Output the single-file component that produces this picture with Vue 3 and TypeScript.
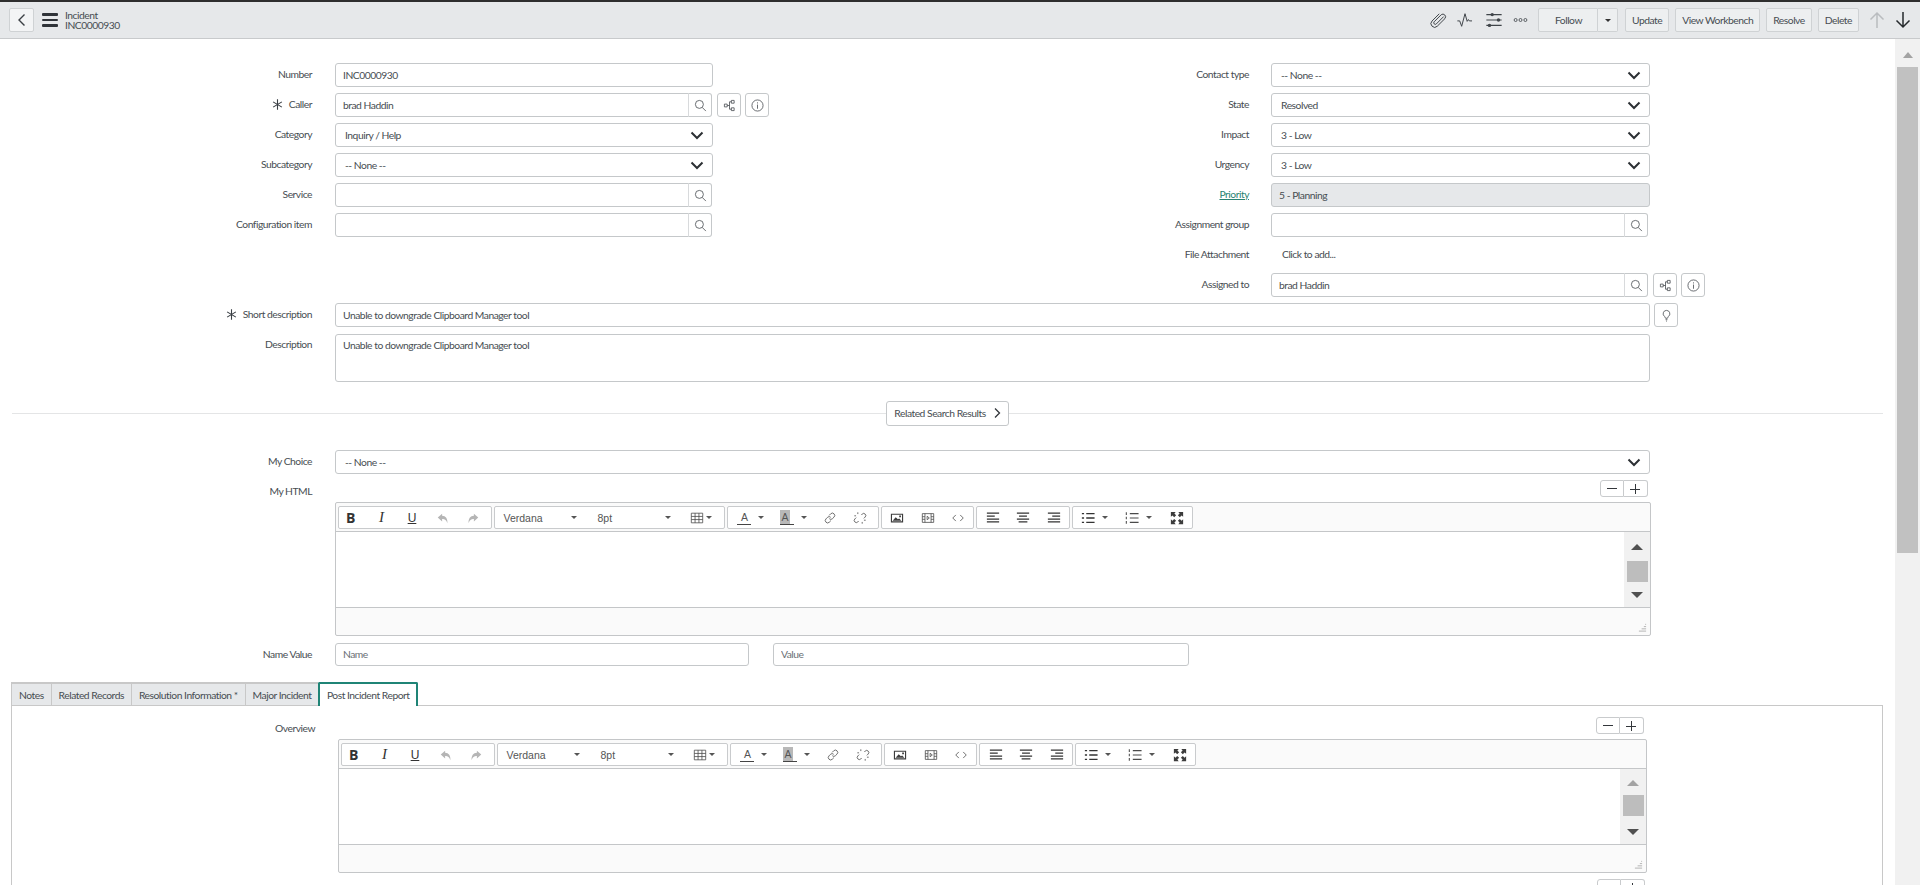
<template>
  <div class="app">
    <!-- 顶部表单头 -->
    <header class="form-header">
      <button class="back-btn" aria-label="Back">
        <svg viewBox="0 0 12 16" class="back-icon"><path d="M8.5 2.5 3 8l5.5 5.5" /></svg>
      </button>
      <div class="menu-icon"><span></span><span></span><span></span></div>
      <div class="record-title">
        <div>Incident</div>
        <div>INC0000930</div>
      </div>

      <div class="header-actions">
        <svg class="hd-icon clip" viewBox="0 0 20 20"><path d="M16.3 6.2 8.1 14.4a1.7 1.7 0 0 1-2.4-2.4l7.9-7.9a3 3 0 0 1 4.2 4.2l-8.6 8.6a4.1 4.1 0 0 1-5.8-5.8l8-8" /></svg>
        <svg class="hd-icon pulse" viewBox="0 0 20 20"><path d="M1.5 11h2.6l2.2 6L10 3l2.4 8.5 1.4-2 1 1.5h3" /></svg>
        <svg class="hd-icon sliders" viewBox="0 0 20 20">
          <path d="M1.5 4h17M1.5 10h17M1.5 16h17" />
          <circle cx="8" cy="4" r="1.9" /><circle cx="15" cy="10" r="1.9" /><circle cx="5" cy="16" r="1.9" />
        </svg>
        <svg class="hd-icon dots" viewBox="0 0 20 8"><circle cx="3.5" cy="4" r="2" /><circle cx="10" cy="4" r="2" /><circle cx="16.5" cy="4" r="2" /></svg>

        <div class="follow-group">
          <button class="hd-btn follow">Follow</button>
          <button class="hd-btn follow-caret"><i class="caret dark"></i></button>
        </div>
        <button v-for="b in headerButtons" :key="b" class="hd-btn">{{ b }}</button>
        <svg class="nav-arrow up" viewBox="0 0 18 20"><path d="M9 18V3M2.5 9.5 9 3l6.5 6.5" /></svg>
        <svg class="nav-arrow" viewBox="0 0 18 20"><path d="M9 2v15M2.5 10.5 9 17l6.5-6.5" /></svg>
      </div>
    </header>

    <div class="page">
      <main class="content">
        <div class="two-cols">
          <div class="col left-col">
            <div v-for="f in leftFields" :key="f.label" class="field">
              <label class="label">
                <svg v-if="f.required" class="req" viewBox="0 0 10 10"><path :d="starPath" /></svg>{{ f.label }}
              </label>
              <select v-if="f.kind === 'select'" class="select-box ctl-left"><option>{{ f.value }}</option></select>
              <div v-else-if="f.kind === 'lookup'" class="lookup ctl-left-lookup">
                <input class="input-box" type="text" :value="f.value" />
                <button class="search-btn"><svg class="ic" viewBox="0 0 14 14"><path :d="searchPath" /></svg></button>
              </div>
              <input v-else class="input-box ctl-left" type="text" :value="f.value" />
              <template v-if="f.refs">
                <button class="side-btn first"><svg class="ic" viewBox="0 0 14 14"><path :d="treePath" /></svg></button>
                <button class="side-btn"><svg class="ic" viewBox="0 0 14 14"><path :d="infoPath" /></svg></button>
              </template>
            </div>
          </div>

          <div class="col right-col">
            <div v-for="f in rightFields" :key="f.label" class="field">
              <label class="label r-label" :class="{ link: f.link }">{{ f.label }}</label>
              <select v-if="f.kind === 'select'" class="select-box ctl-right"><option>{{ f.value }}</option></select>
              <div v-else-if="f.kind === 'lookup'" class="lookup ctl-right-lookup">
                <input class="input-box" type="text" :value="f.value" />
                <button class="search-btn"><svg class="ic" viewBox="0 0 14 14"><path :d="searchPath" /></svg></button>
              </div>
              <div v-else-if="f.kind === 'attach'" class="attach">{{ f.value }}</div>
              <input v-else class="input-box ctl-right" :class="{ readonly: f.kind === 'readonly' }" type="text" :value="f.value" readonly />
              <template v-if="f.refs">
                <button class="side-btn first"><svg class="ic" viewBox="0 0 14 14"><path :d="treePath" /></svg></button>
                <button class="side-btn"><svg class="ic" viewBox="0 0 14 14"><path :d="infoPath" /></svg></button>
              </template>
            </div>
          </div>
        </div>

        <div class="field">
          <label class="label">
            <svg class="req" viewBox="0 0 10 10"><path :d="starPath" /></svg>Short description
          </label>
          <input class="input-box ctl-full" type="text" value="Unable to downgrade Clipboard Manager tool" />
          <button class="side-btn bulb"><svg class="ic" viewBox="0 0 14 14"><path d="M7 1.5a3.6 3.6 0 0 0-2 6.6L6 10h2l1-1.9a3.6 3.6 0 0 0-2-6.6ZM6 11.5h2M6.5 13h1" /></svg></button>
        </div>
        <div class="field desc-row">
          <label class="label">Description</label>
          <textarea class="text-box ctl-full">Unable to downgrade Clipboard Manager tool</textarea>
        </div>

        <div class="related-row">
          <span class="rule"></span>
          <button class="related-btn">
            Related Search Results
            <svg viewBox="0 0 8 12" class="related-chev"><path d="M2 1.5 6.5 6 2 10.5" /></svg>
          </button>
          <span class="rule"></span>
        </div>

        <div class="field choice-row">
          <label class="label">My Choice</label>
          <select class="select-box ctl-full"><option>-- None --</option></select>
        </div>

        <!-- 第一个富文本编辑器 -->
        <div class="field html-row">
          <label class="label">My HTML</label>
          <div class="html-ctl">
            <div class="zoom-btns"><button class="zb minus"><i></i></button><button class="zb plus"><i></i><i></i></button></div>
            <div class="editor">
              <div class="toolbar">
                <div v-for="(group, gi) in toolbar" :key="gi" class="tb-group">
                  <div v-for="(item, ii) in group" :key="ii" class="tb-cell" :class="item.cls">
                    <span v-if="item.text" class="tb-text">{{ item.text }}</span>
                    <svg v-if="item.d" class="tb-svg" :class="{ solid: item.solid, muted: item.muted }" viewBox="0 0 16 16"><path :d="item.d" /></svg>
                    <i v-if="item.caret" class="caret"></i>
                  </div>
                </div>
              </div>
              <div class="editor-body">
                <div class="editor-text"></div>
                <div class="editor-scroll">
                  <i class="tri up-tri"></i><span class="thumb"></span><i class="tri down-tri"></i>
                </div>
              </div>
              <div class="editor-status"><svg class="resize" viewBox="0 0 10 10"><path d="M1 9h8M4 6.5h5M6.5 4H9M8 1.5h1" /></svg></div>
            </div>
          </div>
        </div>

        <div class="field name-row">
          <label class="label">Name Value</label>
          <input class="input-box name-input" type="text" placeholder="Name" />
          <input class="input-box value-input" type="text" placeholder="Value" />
        </div>

        <!-- 标签页 -->
        <div class="tabs">
          <div v-for="t in tabs" :key="t" class="tab" :class="{ active: t === activeTab }">{{ t }}</div>
        </div>
        <div class="tab-body">
          <div class="field overview-row">
            <label class="label ov-label">Overview</label>
            <div class="ov-ctl">
              <div class="zoom-btns"><button class="zb minus"><i></i></button><button class="zb plus"><i></i><i></i></button></div>
              <div class="editor">
                <div class="toolbar">
                  <div v-for="(group, gi) in toolbar" :key="gi" class="tb-group">
                    <div v-for="(item, ii) in group" :key="ii" class="tb-cell" :class="item.cls">
                      <span v-if="item.text" class="tb-text">{{ item.text }}</span>
                      <svg v-if="item.d" class="tb-svg" :class="{ solid: item.solid, muted: item.muted }" viewBox="0 0 16 16"><path :d="item.d" /></svg>
                      <i v-if="item.caret" class="caret"></i>
                    </div>
                  </div>
                </div>
                <div class="editor-body">
                  <div class="editor-text"></div>
                  <div class="editor-scroll">
                    <i class="tri up-tri off"></i><span class="thumb"></span><i class="tri down-tri"></i>
                  </div>
                </div>
                <div class="editor-status"><svg class="resize" viewBox="0 0 10 10"><path d="M1 9h8M4 6.5h5M6.5 4H9M8 1.5h1" /></svg></div>
              </div>
              <div class="zoom-btns next"><button class="zb minus"><i></i></button><button class="zb plus"><i></i><i></i></button></div>
            </div>
          </div>
        </div>
      </main>

      <div class="page-scroll">
        <i class="page-tri"></i>
        <span class="page-thumb"></span>
      </div>
    </div>
  </div>
</template>

<script setup lang="ts">
interface Field {
  label: string
  value: string
  kind: 'input' | 'select' | 'lookup' | 'readonly' | 'attach'
  required?: boolean
  refs?: boolean
  link?: boolean
}

interface ToolItem {
  text?: string
  d?: string
  cls?: string
  caret?: boolean
  solid?: boolean
  muted?: boolean
}

const headerButtons = ['Update', 'View Workbench', 'Resolve', 'Delete']

const leftFields: Field[] = [
  { label: 'Number', value: 'INC0000930', kind: 'input' },
  { label: 'Caller', value: 'brad Haddin', kind: 'lookup', required: true, refs: true },
  { label: 'Category', value: 'Inquiry / Help', kind: 'select' },
  { label: 'Subcategory', value: '-- None --', kind: 'select' },
  { label: 'Service', value: '', kind: 'lookup' },
  { label: 'Configuration item', value: '', kind: 'lookup' }
]

const rightFields: Field[] = [
  { label: 'Contact type', value: '-- None --', kind: 'select' },
  { label: 'State', value: 'Resolved', kind: 'select' },
  { label: 'Impact', value: '3 - Low', kind: 'select' },
  { label: 'Urgency', value: '3 - Low', kind: 'select' },
  { label: 'Priority', value: '5 - Planning', kind: 'readonly', link: true },
  { label: 'Assignment group', value: '', kind: 'lookup' },
  { label: 'File Attachment', value: 'Click to add...', kind: 'attach' },
  { label: 'Assigned to', value: 'brad Haddin', kind: 'lookup', refs: true }
]

const tabs = ['Notes', 'Related Records', 'Resolution Information *', 'Major Incident', 'Post Incident Report']
const activeTab = 'Post Incident Report'

// 图标路径
const starPath = 'M5 .3v9.4M1 2.6l8 4.8M9 2.6 1 7.4'
const searchPath = 'M5.8 1.5a4.3 4.3 0 1 0 0 8.6 4.3 4.3 0 0 0 0-8.6ZM9 9.2l3.8 3.8'
const treePath = 'M1.5 5.5h3v3h-3zM9 1.5h3v3H9zM9 9.5h3v3H9zM4.5 7h2.5M7 3v8M7 3h2M7 11h2'
const infoPath = 'M7 1a6 6 0 1 0 0 12A6 6 0 0 0 7 1ZM7 6v4.5M7 3.6v1.2'

const toolbar: ToolItem[][] = [
  [
    { text: 'B', cls: 'c31 t-bold' },
    { text: 'I', cls: 'c31 t-italic' },
    { text: 'U', cls: 'c31 t-under' },
    { d: 'M7 3 2 7.5 7 12V9c3 0 5 1 6 5 .5-5-2-8.5-6-8.5V3Z', solid: true, muted: true, cls: 'c31' },
    { d: 'M9 3l5 4.5L9 12V9c-3 0-5 1-6 5-.5-5 2-8.5 6-8.5V3Z', solid: true, muted: true, cls: 'c31' }
  ],
  [
    { text: 'Verdana', cls: 'c-select', caret: true },
    { text: '8pt', cls: 'c-select', caret: true },
    { d: 'M1.5 2.5h13v11h-13zM1.5 6.2h13M1.5 9.8h13M5.8 2.5v11M10.2 2.5v11', cls: 'c-table', caret: true }
  ],
  [
    { text: 'A', cls: 'c-color', caret: true },
    { text: 'A', cls: 'c-color hl', caret: true },
    { d: 'M7 5l1.8-1.8a2.6 2.6 0 0 1 3.8 3.8L10.8 8.8a2.6 2.6 0 0 1-3.6 0M9 11l-1.8 1.8a2.6 2.6 0 0 1-3.8-3.8L5.2 7.2a2.6 2.6 0 0 1 3.6 0', cls: 'c31' },
    { d: 'M9.5 4.5l1-1a2.4 2.4 0 0 1 3.4 3.4l-1.5 1.5M6.5 11.5l-1 1a2.4 2.4 0 0 1-3.4-3.4l1.5-1.5M5.5 1.5v2M1.5 5.5h2M10.5 12.5v2M12.5 10.5h2', cls: 'c31' }
  ],
  [
    { d: 'M1 3h14v10H1zM2.3 4.3v7.4h11.4V4.3zM3 11l3.5-4 2.5 2.5 1.5-1 2.5 2.5zM10.5 5.2h2v2h-2z', solid: true, cls: 'c31 pic' },
    { d: 'M1.5 3h13v10h-13zM4.5 3v10M11.5 3v10M7 6l2.5 2L7 10zM1.5 6.5h3M1.5 9.5h3M11.5 6.5h3M11.5 9.5h3', cls: 'c31' },
    { d: 'M5.5 4.5 2 8l3.5 3.5M10.5 4.5 14 8l-3.5 3.5', cls: 'c31' }
  ],
  [
    { d: 'M1 2.5h14M1 5.8h9M1 9.2h14M1 12.5h14', cls: 'c31 thick' },
    { d: 'M1 2.5h14M3.5 5.8h9M1 9.2h14M3 12.5h10', cls: 'c31 thick' },
    { d: 'M1 2.5h14M6 5.8h9M1 9.2h14M1 12.5h14', cls: 'c31 thick' }
  ],
  [
    { d: 'M6 3h9.5M6 8h9.5M6 13h9.5M1 3h2.5M1 8h2.5M1 13h2.5', cls: 'c-list thick', caret: true },
    { d: 'M5.5 3h10M5.5 8h10M5.5 13h10M1.5 1.5v3M1.5 6.5v3M1.5 11.5v3', cls: 'c-list mid', caret: true },
    { d: 'M1 1h5.5L5 2.8 7 4.8 4.8 7l-2-2L1 6.5zM15 1v5.5L13.2 5l-2 2L9 4.8l2-2L9.5 1zM15 15H9.5l1.5-1.8-2-2 2.2-2.2 2 2L15 9.5zM1 15V9.5L2.8 11l2-2L7 11.2l-2 2 1.5 1.8z', cls: 'c31', solid: true }
  ]
]
</script>

<style>
html,
body {
  margin: 0;
  overflow: hidden;
  background: #fff;
}
</style>

<style scoped>
.app {
  height: 885px;
  overflow: hidden;
  display: flex;
  flex-direction: column;
  font-family: Lato, "Liberation Sans", sans-serif;
  font-size: 10.3px;
  letter-spacing: -0.48px;
  color: #474d52;
}

button {
  font: inherit;
  letter-spacing: inherit;
  color: inherit;
  cursor: pointer;
}

/* 表单头 */
.form-header {
  flex: none;
  height: 39px;
  box-sizing: border-box;
  display: flex;
  align-items: center;
  padding: 0 0 0 9px;
  background: #e6e8ea;
  border-top: 2px solid #2e2e2e;
  border-bottom: 1px solid #c8cacc;
}

.back-btn {
  width: 25px;
  height: 24px;
  padding: 0;
  display: flex;
  align-items: center;
  justify-content: center;
  background: #f3f4f5;
  border: 1px solid #cfd2d4;
  border-radius: 2px;
}

.back-icon {
  width: 12px;
  height: 16px;
  fill: none;
  stroke: #3b3f44;
  stroke-width: 1.4;
}

.menu-icon {
  margin-left: 8px;
  width: 16px;
  display: flex;
  flex-direction: column;
  gap: 3px;
}

.menu-icon span {
  height: 2.4px;
  background: #2f3338;
  border-radius: 1px;
}

.record-title {
  margin-left: 7px;
  line-height: 10px;
}

.header-actions {
  margin-left: auto;
  display: flex;
  align-items: center;
}

.hd-icon {
  width: 18px;
  height: 18px;
  fill: none;
  stroke: #3f4449;
  stroke-width: 1.1;
  margin-right: 9px;
}

.hd-icon.pulse {
  margin-right: 11px;
}

.hd-icon.sliders {
  stroke-width: 1.3;
  margin-right: 9.5px;
}

.hd-icon.sliders circle {
  fill: #3f4449;
  stroke: none;
}

.hd-icon.dots {
  width: 17px;
  height: 6px;
  margin-right: 9px;
}

.follow-group {
  display: flex;
  margin-right: 6.5px;
}

.hd-btn {
  height: 24px;
  padding: 0 6px;
  background: #edeff0;
  border: 1px solid #cfd2d4;
  border-radius: 2px;
  margin-right: 6px;
}

.follow {
  width: 60px;
  margin-right: 0;
  border-radius: 2px 0 0 2px;
}

.follow-caret {
  width: 20px;
  padding: 0;
  margin-right: 0;
  border-left: 0;
  border-radius: 0 2px 2px 0;
  display: flex;
  align-items: center;
  justify-content: center;
}

.nav-arrow {
  width: 18px;
  height: 20px;
  fill: none;
  stroke: #25292d;
  stroke-width: 1.5;
  margin-left: 8px;
  margin-right: 8px;
}

.nav-arrow.up {
  stroke: #b9bcbf;
  margin-left: 3px;
  margin-right: 0;
}

.caret {
  display: inline-block;
  flex: none;
  width: 0;
  height: 0;
  border-left: 3px solid transparent;
  border-right: 3px solid transparent;
  border-top: 3px solid #555;
}

.caret.dark {
  border-top-color: #333;
}

/* 页面主体 */
.page {
  flex: 1;
  min-height: 0;
  display: flex;
}

.content {
  flex: none;
  width: 1895px;
  height: 846px;
  overflow: hidden;
  padding-top: 24px;
  box-sizing: border-box;
}

.two-cols {
  display: flex;
}

.left-col {
  width: 930px;
}

.field {
  display: flex;
  align-items: flex-start;
  min-height: 24px;
  margin-bottom: 6px;
}

.label {
  flex: none;
  width: 312px;
  margin-right: 23px;
  line-height: 23px;
  text-align: right;
  white-space: nowrap;
}

.r-label {
  width: 319px;
  margin-right: 22px;
}

.label.link {
  color: #2a8372;
  text-decoration: underline;
}

.req {
  width: 11px;
  height: 11px;
  margin-right: 6px;
  vertical-align: -2px;
  fill: none;
  stroke: #3a3f44;
  stroke-width: 1;
}

.input-box,
.select-box,
.text-box {
  box-sizing: border-box;
  height: 24px;
  padding: 0 7px 1px;
  margin: 0;
  background: #fff;
  border: 1px solid #c5c8ca;
  border-radius: 3px;
  font: inherit;
  letter-spacing: inherit;
  color: inherit;
  outline: none;
}

.input-box::placeholder {
  color: #6a6f74;
  opacity: 1;
}

.select-box {
  appearance: none;
  padding-left: 9px;
  background-image: url("data:image/svg+xml,%3Csvg xmlns='http://www.w3.org/2000/svg' width='14' height='9'%3E%3Cpath d='M1.5 1.5 7 7l5.5-5.5' fill='none' stroke='%232c3034' stroke-width='2'/%3E%3C/svg%3E");
  background-repeat: no-repeat;
  background-position: right 8px center;
}

.text-box {
  display: block;
  height: 48px;
  padding: 4px 7px;
  resize: none;
}

.input-box.readonly {
  background: #e6e8ea;
}

.ctl-left {
  width: 378px;
}

.ctl-left-lookup {
  width: 377px;
}

.ctl-right {
  width: 379px;
}

.ctl-right-lookup {
  width: 377px;
}

.ctl-full {
  width: 1315px;
}

.lookup {
  display: flex;
}

.lookup .input-box {
  flex: 1;
  min-width: 0;
  border-radius: 3px 0 0 3px;
}

.search-btn {
  flex: none;
  width: 24px;
  height: 24px;
  padding: 0;
  background: #fff;
  border: 1px solid #c5c8ca;
  border-left: 1px solid #d8dadc;
  border-radius: 0 3px 3px 0;
  margin-left: -1px;
  display: flex;
  align-items: center;
  justify-content: center;
}

.side-btn {
  flex: none;
  width: 24px;
  height: 24px;
  padding: 0;
  margin-left: 4px;
  background: #fff;
  border: 1px solid #c5c8ca;
  border-radius: 3px;
  display: flex;
  align-items: center;
  justify-content: center;
}

.side-btn.first {
  margin-left: 5px;
}

.side-btn.bulb {
  margin-left: 4px;
}

.ic {
  width: 13px;
  height: 13px;
  fill: none;
  stroke: #4d5257;
  stroke-width: 0.9;
}

.attach {
  line-height: 23px;
  padding-left: 11px;
}

.desc-row {
  margin-top: 7px;
  margin-bottom: 0;
}

.desc-row .label {
  line-height: 21px;
}

/* 相关搜索分隔 */
.related-row {
  margin: 19px 12px 24px;
  display: flex;
  align-items: center;
}

.rule {
  flex: 1;
  height: 1px;
  background: #e4e5e6;
}

.related-btn {
  height: 25px;
  width: 123px;
  padding: 0 0 1px;
  display: flex;
  align-items: center;
  justify-content: center;
  gap: 7px;
  background: #fff;
  border: 1px solid #c5c8ca;
  border-radius: 3px;
}

.related-chev {
  width: 8px;
  height: 12px;
  fill: none;
  stroke: #33373b;
  stroke-width: 1.3;
}

.choice-row {
  margin-bottom: 6px;
}

.html-row {
  margin-bottom: 7px;
}

.html-row .label {
  line-height: 22px;
}

.html-ctl {
  width: 1316px;
}

.zoom-btns {
  display: flex;
  justify-content: flex-end;
  padding-right: 3px;
  margin-bottom: 5px;
}

.zoom-btns.next {
  margin-top: 6px;
  padding-right: 2px;
}

.zb {
  position: relative;
  width: 24px;
  height: 17px;
  padding: 0;
  background: #fff;
  border: 1px solid #c9cbcd;
}

.zb.minus {
  border-radius: 3px 0 0 3px;
}

.zb.plus {
  border-left: 0;
  border-radius: 0 3px 3px 0;
}

/* 加减号的线段叠在按钮上 */
.zb i {
  position: absolute;
  left: 6px;
  top: 7px;
  width: 10px;
  background: #33373b;
  height: 1.4px;
}

.zb.plus i {
  height: 1px;
  top: 7.5px;
  left: 6px;
}

.zb.plus i + i {
  left: 10.5px;
  top: 3px;
  width: 1px;
  height: 10px;
}

/* 编辑器 */
.editor {
  box-sizing: border-box;
  height: 134px;
  background: #fafafa;
  border: 1px solid #c4c6c8;
  border-radius: 2px;
  display: flex;
  flex-direction: column;
}

.toolbar {
  flex: none;
  height: 29px;
  box-sizing: border-box;
  padding: 3px 0 0 1.5px;
  display: flex;
  gap: 2px;
  border-bottom: 1px solid #c4c6c8;
}

.tb-group {
  display: flex;
  align-items: center;
  height: 23px;
  box-sizing: border-box;
  background: #fff;
  border: 1px solid #c9cbcd;
  border-radius: 2px;
}

.tb-group:first-child {
  padding-right: 3px;
}

.tb-group:first-child .tb-cell:first-child {
  margin-left: -3px;
}

.tb-group:nth-child(3) {
  padding-right: 2px;
}

.tb-cell {
  flex: none;
  display: flex;
  align-items: center;
  justify-content: center;
  height: 21px;
  font-family: "Liberation Sans", Arial, sans-serif;
  font-size: 10.5px;
  letter-spacing: 0;
  color: #555;
}

.c31 {
  width: 30.6px;
}

.t-bold {
  font-family: "Open Sans", sans-serif;
  font-weight: 700;
  font-size: 14px;
  color: #333;
}

.t-italic {
  font-family: "Liberation Serif", serif;
  font-style: italic;
  font-size: 15px;
  color: #333;
}

.t-under {
  font-size: 12px;
  color: #333;
  text-decoration: underline;
}

.tb-svg {
  width: 14px;
  height: 14px;
  fill: none;
  stroke: #4a4a4a;
  stroke-width: 0.9;
}

.tb-svg.solid {
  fill: #3c3c3c;
  fill-rule: evenodd;
  stroke: none;
}

.tb-svg.muted {
  fill: #b5b5b5;
}

.thick .tb-svg {
  stroke-width: 1.5;
  stroke: #333;
}

.mid .tb-svg {
  stroke-width: 1.2;
}

.c-select {
  width: 94px;
  box-sizing: border-box;
  padding: 0 12px 0 8px;
  justify-content: space-between;
}

.c-table {
  width: 41px;
  gap: 2px;
  justify-content: flex-start;
  padding-left: 7px;
  box-sizing: border-box;
}

.c-color {
  width: 43px;
  box-sizing: border-box;
  padding-left: 9px;
  justify-content: flex-start;
  gap: 7px;
}

.c-color .tb-text {
  width: 14px;
  height: 15px;
  line-height: 14px;
  text-align: center;
  box-sizing: border-box;
  border-bottom: 1px solid #444;
}

.c-color.hl .tb-text {
  background: linear-gradient(#b8b8b8, #b8b8b8) no-repeat left top / 10px 100%;
  text-align: left;
  padding-left: 1px;
}

.c-list {
  width: 44px;
  gap: 7px;
  justify-content: flex-start;
  padding-left: 8px;
  box-sizing: border-box;
}

.editor-body {
  flex: none;
  height: 76px;
  display: flex;
  background: #fff;
  border-bottom: 1px solid #c4c6c8;
  box-sizing: border-box;
}

.editor-text {
  flex: 1;
}

.editor-scroll {
  flex: none;
  width: 26px;
  background: #f1f1f1;
  display: flex;
  flex-direction: column;
  align-items: center;
  padding-top: 12px;
  box-sizing: border-box;
}

.thumb {
  width: 21px;
  height: 21px;
  margin: 11px 0 10px;
  background: #bdbdbd;
}

.ov-ctl .editor-scroll {
  padding-top: 11px;
}

.ov-ctl .thumb {
  margin: 9px 0 13px;
}

.tri {
  width: 0;
  height: 0;
  border-left: 6px solid transparent;
  border-right: 6px solid transparent;
}

.up-tri {
  border-bottom: 6px solid #505050;
}

.up-tri.off {
  border-bottom-color: #a3a3a3;
}

.down-tri {
  border-top: 6px solid #505050;
}

.editor-status {
  flex: 1;
  display: flex;
  justify-content: flex-end;
  align-items: flex-end;
  padding: 0 3px 3px 0;
}

.resize {
  width: 9px;
  height: 9px;
  fill: none;
  stroke: #9a9a9a;
  stroke-width: 0.8;
}

.name-row {
  min-height: 23px;
  margin-bottom: 16px;
}

.name-row .label {
  line-height: 22px;
}

.name-input {
  width: 414px;
  height: 23px;
}

.value-input {
  width: 416px;
  height: 23px;
  margin-left: 24px;
}

/* 标签页 */
.tabs {
  display: flex;
  margin-left: 11px;
  height: 23px;
}

.tab {
  box-sizing: border-box;
  height: 23px;
  padding: 0 7px;
  line-height: 22px;
  background: #e6e8ea;
  border-top: 2px solid #c8c8c8;
  border-left: 1px solid #c8c8c8;
  white-space: nowrap;
}

.tab.active {
  position: relative;
  height: 24px;
  background: #fff;
  border: 2px solid #1f8476;
  border-bottom: 0;
  border-radius: 2px 2px 0 0;
  padding: 0 6.5px;
}

.tab-body {
  box-sizing: border-box;
  height: 200px;
  margin: 0 12px 0 11px;
  padding-top: 11px;
  border: 1px solid #c8c8c8;
}

.ov-label {
  width: 303px;
  margin-right: 23px;
}

.ov-ctl {
  width: 1309px;
}

.page-scroll {
  flex: none;
  width: 25px;
  background: #f1f1f1;
  display: flex;
  flex-direction: column;
  align-items: center;
  padding-top: 13px;
  box-sizing: border-box;
}

.page-tri {
  width: 0;
  height: 0;
  border-left: 5.5px solid transparent;
  border-right: 5.5px solid transparent;
  border-bottom: 6px solid #a3a3a3;
}

.page-thumb {
  width: 21px;
  height: 486px;
  margin-top: 9px;
  background: #c1c1c1;
}
</style>
